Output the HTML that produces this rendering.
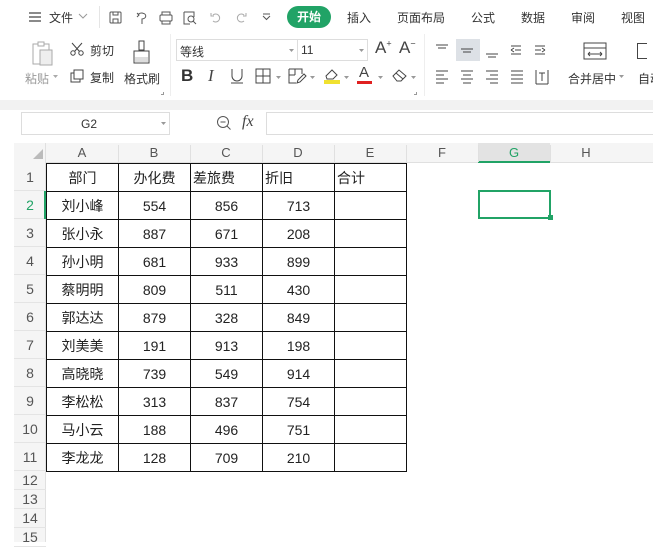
<!DOCTYPE html>
<html><head><meta charset="utf-8"><style>
*{margin:0;padding:0;box-sizing:border-box}
body{width:653px;height:542px;overflow:hidden;background:#fff;font-family:"Liberation Sans","Noto Sans CJK SC",sans-serif;color:#333;position:relative}
.a{position:absolute;white-space:nowrap}
.t{font-size:12px;color:#333}
.g{color:#999}
svg{position:absolute;overflow:visible}
.cell{position:absolute;font-size:14px;color:#222;text-align:center;line-height:28px}
</style></head><body>
<!-- top menu -->
<svg style="left:28px;top:11px" width="14" height="12"><path d="M1 2h12M1 6h12M1 10h12" stroke="#444" stroke-width="1.2"/></svg>
<div class="a t" style="left:49px;top:9px">文件</div>
<svg style="left:78px;top:13px" width="10" height="6"><path d="M1 1l4 4 4-4" stroke="#999" fill="none"/></svg>
<div class="a" style="left:99px;top:6px;width:1px;height:22px;background:#e5e5e5"></div>
<svg style="left:109px;top:11px" width="14" height="14"><rect x="1" y="1" width="11" height="11" rx="1" fill="none" stroke="#555"/><path d="M4 1v3h5V1M4 12V8h5v4" fill="none" stroke="#555"/></svg>
<svg style="left:135px;top:11px" width="14" height="14"><path d="M3 4a4 3 0 1 1 4 4v5M2 2l2 2-2 2" fill="none" stroke="#555"/></svg>
<svg style="left:159px;top:11px" width="14" height="14"><rect x="1" y="4" width="12" height="6" rx="1" fill="none" stroke="#555"/><path d="M3 4V1h8v3M3 10v3h8v-3" fill="none" stroke="#555"/></svg>
<svg style="left:183px;top:11px" width="14" height="14"><path d="M1 1h10v5M1 1v12h6" fill="none" stroke="#555"/><circle cx="8" cy="8" r="3" fill="none" stroke="#555"/><path d="M10 10l3 3" stroke="#555"/></svg>
<svg style="left:210px;top:12px" width="12" height="12"><path d="M3 3a4 4 0 1 1 0 6M1 1v3h3" fill="none" stroke="#aaa"/></svg>
<svg style="left:235px;top:12px" width="12" height="12"><path d="M9 3a4 4 0 1 0 0 6M11 1v3H8" fill="none" stroke="#aaa"/></svg>
<svg style="left:262px;top:13px" width="9" height="8"><path d="M1 1h7M1 3l3.5 3.5L8 3" fill="none" stroke="#555"/></svg>
<div class="a" style="left:287px;top:6px;width:44px;height:22px;border-radius:11px;background:#21a366;color:#fff;font-size:12px;font-weight:bold;text-align:center;line-height:22px">开始</div>
<div class="a t" style="left:347px;top:9px">插入</div>
<div class="a t" style="left:397px;top:9px">页面布局</div>
<div class="a t" style="left:471px;top:9px">公式</div>
<div class="a t" style="left:521px;top:9px">数据</div>
<div class="a t" style="left:571px;top:9px">审阅</div>
<div class="a t" style="left:621px;top:9px">视图</div>
<!-- ribbon -->
<svg style="left:31px;top:41px" width="24" height="24"><rect x="2" y="3" width="16" height="20" fill="none" stroke="#aaa"/><rect x="7" y="1" width="6" height="4" fill="#fff" stroke="#aaa"/><rect x="9" y="9" width="12" height="15" fill="#eee" stroke="#aaa"/></svg>
<div class="a t g" style="left:25px;top:70px">粘贴</div>
<svg style="left:53px;top:75px" width="5" height="3"><path d="M0 0h5L2.5 3z" fill="#aaa"/></svg>
<svg style="left:70px;top:42px" width="14" height="14"><circle cx="3" cy="11" r="2.2" fill="none" stroke="#444"/><circle cx="11" cy="11" r="2.2" fill="none" stroke="#444"/><path d="M4.5 9.5L12 1M9.5 9.5L2 1" stroke="#444"/></svg>
<div class="a t" style="left:90px;top:42px">剪切</div>
<svg style="left:70px;top:69px" width="14" height="14"><rect x="4" y="1" width="9" height="9" fill="none" stroke="#444"/><path d="M4 4H1v9h9v-3" fill="none" stroke="#444"/></svg>
<div class="a t" style="left:90px;top:69px">复制</div>
<svg style="left:132px;top:40px" width="20" height="26"><rect x="7" y="1" width="5" height="9" fill="none" stroke="#444"/><path d="M2 11h15v12H2z" fill="none" stroke="#444"/><rect x="3" y="17" width="13" height="5" fill="#ddd"/></svg>
<div class="a t" style="left:124px;top:70px">格式刷</div>
<div class="a" style="left:161px;top:92px;width:3px;height:3px;border-right:1px solid #999;border-bottom:1px solid #999"></div>
<div class="a" style="left:170px;top:34px;width:1px;height:62px;background:#eee"></div>
<div class="a" style="left:176px;top:39px;width:192px;height:22px;border:1px solid #ddd"></div>
<div class="a" style="left:297px;top:40px;width:1px;height:20px;background:#ddd"></div>
<div class="a t" style="left:180px;top:43px">等线</div>
<svg style="left:289px;top:49px" width="5" height="3"><path d="M0 0h5L2.5 3z" fill="#999"/></svg>
<div class="a t" style="left:301px;top:43px">11</div>
<svg style="left:359px;top:49px" width="5" height="3"><path d="M0 0h5L2.5 3z" fill="#999"/></svg>
<div class="a" style="left:375px;top:38px;font-size:17px;color:#444">A<sup style="font-size:9px">+</sup></div>
<div class="a" style="left:399px;top:38px;font-size:17px;color:#444">A<sup style="font-size:9px">−</sup></div>
<div class="a" style="left:181px;top:66px;font-size:17px;font-weight:bold;color:#333">B</div>
<div class="a" style="left:208px;top:66px;font-size:17px;font-style:italic;color:#444;font-family:'Liberation Serif',serif">I</div>
<svg style="left:230px;top:68px" width="14" height="16"><path d="M2 1v7a5 5 0 0 0 10 0V1M1 15h12" fill="none" stroke="#444"/></svg>
<svg style="left:255px;top:68px" width="16" height="16"><rect x="1" y="1" width="14" height="14" fill="none" stroke="#444"/><path d="M8 1v14M1 8h14" stroke="#444"/></svg>
<svg style="left:276px;top:76px" width="5" height="3"><path d="M0 0h5L2.5 3z" fill="#999"/></svg>
<svg style="left:288px;top:68px" width="18" height="16"><path d="M1 1h13v5M1 1v14h7M1 7h6M7 1v6" fill="none" stroke="#444"/><path d="M9 15l1-3 6-6 2 2-6 6z" fill="none" stroke="#444"/></svg>
<svg style="left:310px;top:76px" width="5" height="3"><path d="M0 0h5L2.5 3z" fill="#999"/></svg>
<svg style="left:323px;top:67px" width="18" height="18"><path d="M3 9l6-6 5 5-4 4H4z" fill="none" stroke="#444"/><rect x="1" y="13" width="16" height="4" fill="#f0e130"/></svg>
<svg style="left:344px;top:76px" width="5" height="3"><path d="M0 0h5L2.5 3z" fill="#999"/></svg>
<div class="a" style="left:359px;top:64px;font-size:15px;color:#444">A</div>
<div class="a" style="left:357px;top:81px;width:15px;height:3px;background:#e02020"></div>
<svg style="left:378px;top:76px" width="5" height="3"><path d="M0 0h5L2.5 3z" fill="#999"/></svg>
<svg style="left:391px;top:67px" width="18" height="16"><path d="M2 9l6-6 7 6-5 5H6z" fill="none" stroke="#444"/><path d="M5 6l7 6" stroke="#444"/></svg>
<svg style="left:411px;top:76px" width="5" height="3"><path d="M0 0h5L2.5 3z" fill="#999"/></svg>
<div class="a" style="left:414px;top:92px;width:3px;height:3px;border-right:1px solid #999;border-bottom:1px solid #999"></div>
<div class="a" style="left:424px;top:34px;width:1px;height:62px;background:#eee"></div>
<svg style="left:435px;top:43px" width="200" height="50" stroke="#444" fill="none">
<rect x="21" y="-4" width="24" height="22" fill="#dde1e6" stroke="none"/>
<path d="M1 2h12M3 5h8"/><path d="M26 6h12M28 9h8"/><path d="M51 11h12M53 14h8"/>
<path d="M76 3h10M80 7h6M76 11h10M76 7l3-2M76 7l3 2"/><path d="M100 3h10M100 7h6M100 11h10M110 7l-3-2M110 7l-3 2"/>
<rect x="149" y="0" width="22" height="16"/><path d="M149 5h22M153 11h14M153 11l2-2M153 11l2 2M167 11l-2-2M167 11l-2 2"/>
<path d="M1 28h12M1 32h8M1 36h12M1 40h8"/><path d="M26 28h12M28 32h8M26 36h12M28 40h8"/><path d="M51 28h12M55 32h8M51 36h12M55 40h8"/><path d="M76 28h12M76 32h12M76 36h12M76 40h12"/><path d="M101 27v14M113 27v14M101 41h12M104 30h6M107 30v8"/>
</svg>
<div class="a t" style="left:568px;top:70px">合并居中</div>
<svg style="left:619px;top:75px" width="5" height="3"><path d="M0 0h5L2.5 3z" fill="#999"/></svg>
<div class="a t" style="left:638px;top:70px">自动</div>
<div class="a" style="left:637px;top:43px;width:10px;height:16px;border:1px solid #444;border-right:none"></div>
<!-- grey band -->
<div class="a" style="left:0;top:100px;width:653px;height:10px;background:#f2f2f2"></div>
<!-- formula bar -->
<div class="a" style="left:21px;top:112px;width:149px;height:23px;border:1px solid #ddd"></div>
<div class="a" style="left:81px;top:117px;font-size:12px;color:#333">G2</div>
<svg style="left:161px;top:122px" width="5" height="3"><path d="M0 0h5L2.5 3z" fill="#999"/></svg>
<svg style="left:216px;top:115px" width="16" height="16"><circle cx="7" cy="7" r="5.5" fill="none" stroke="#555"/><path d="M4.5 7h5M11 11l3.5 3.5" stroke="#555"/></svg>
<div class="a" style="left:242px;top:113px;font-size:16px;font-style:italic;color:#444;font-family:'Liberation Serif',serif">fx</div>
<div class="a" style="left:266px;top:112px;width:400px;height:23px;border:1px solid #ddd"></div>
<!-- headers -->
<div class="a" style="left:14px;top:143px;width:639px;height:20px;background:#f5f5f5;border-bottom:1px solid #e0e0e0"></div>
<div class="a" style="left:14px;top:143px;width:32px;height:399px;background:#f5f5f5;border-right:1px solid #e0e0e0"></div>
<svg style="left:33px;top:149px" width="10" height="10"><path d="M10 0v10H0z" fill="#bbb"/></svg>
<div class="a" style="left:478px;top:143px;width:72px;height:20px;background:#e3e3e3;border-bottom:2px solid #21a366"></div>
<div id="cols"></div>
<div id="rows"></div>
<div id="cells"></div>
<div class="a" style="left:478px;top:190px;width:73px;height:29px;border:2px solid #21a366"></div>
<div class="a" style="left:548px;top:215px;width:5px;height:5px;background:#21a366"></div>
<script>
(function(){
var L=['A','B','C','D','E','F','G','H'],h='';
for(var i=0;i<8;i++){h+='<div class="a" style="left:'+(46+72*i)+'px;top:145px;width:72px;text-align:center;font-size:13px;color:'+(i==6?'#21a366':'#555')+'">'+L[i]+'</div>';if(i)h+='<div class="a" style="left:'+(46+72*i)+'px;top:145px;width:1px;height:17px;background:#e0e0e0"></div>';}
document.getElementById('cols').innerHTML=h;h='';
for(var r=1;r<=15;r++){var ty=r<=11?163+28*(r-1):471+19*(r-12),ht=r<=11?28:19;
h+='<div class="a" style="left:14px;top:'+ty+'px;width:32px;height:'+ht+'px;line-height:'+ht+'px;text-align:center;font-size:14px;color:'+(r==2?'#21a366':'#555')+';border-bottom:1px solid #e4e4e4">'+r+'</div>';}
h+='<div class="a" style="left:44px;top:191px;width:2px;height:28px;background:#21a366"></div>';
document.getElementById('rows').innerHTML=h;h='';
var D=[['部门','办化费','差旅费','折旧','合计'],['刘小峰',554,856,713],['张小永',887,671,208],['孙小明',681,933,899],['蔡明明',809,511,430],['郭达达',879,328,849],['刘美美',191,913,198],['高晓晓',739,549,914],['李松松',313,837,754],['马小云',188,496,751],['李龙龙',128,709,210]];
for(var r=0;r<11;r++)for(var c=0;c<5;c++){var v=D[r][c];if(v===undefined)v='';var al=(r==0&&c>1)?'left;padding-left:2px':'center';
h+='<div class="cell" style="left:'+(46+72*c)+'px;top:'+(163+28*r)+'px;width:73px;height:29px;border:1px solid #111;text-align:'+al+'">'+v+'</div>';}
document.getElementById('cells').innerHTML=h;
})();
</script>
</body></html>
